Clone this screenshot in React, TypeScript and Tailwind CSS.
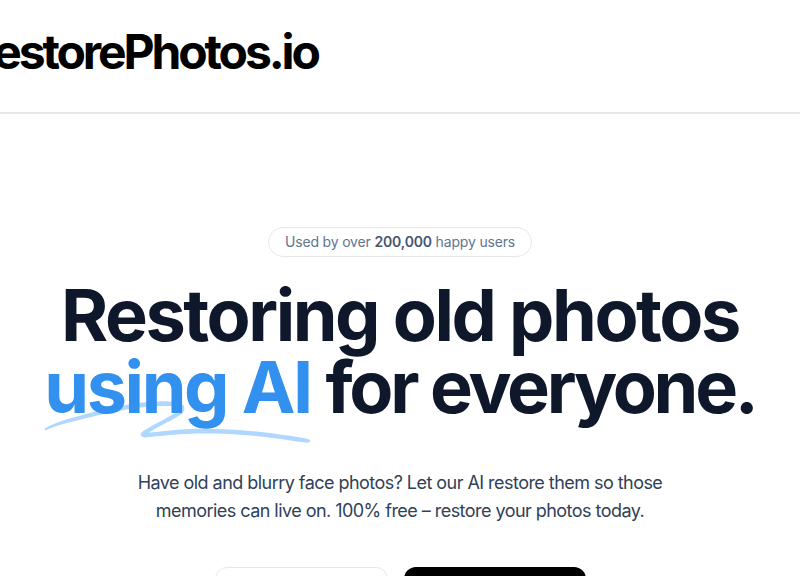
import React from 'react';

function SquigglyLines() {
  return (
    <svg
      aria-hidden="true"
      viewBox="0 0 418 42"
      className="absolute left-0 top-2/3 h-[0.58em] w-full fill-blue-300/70"
      preserveAspectRatio="none"
    >
      <path d="M203.371.916c-26.013-2.078-76.686 1.963-124.73 9.946L67.3 12.749C35.421 18.062 18.2 21.766 6.004 25.934 1.244 27.561.828 27.778.874 28.61c.07 1.214.828 1.121 9.595-1.176 9.072-2.377 17.15-3.920 39.246-7.496C123.565 7.986 157.869 4.492 195.942 5.046c7.461.108 19.25 1.696 19.17 2.582-.107 1.183-7.874 4.31-25.750 10.366-21.992 7.450-35.43 12.534-36.701 13.884-2.173 2.308-.202 4.407 4.442 4.734 2.654.187 3.263.157 15.593-.78 35.401-2.686 57.944-3.488 88.365-3.143 46.327.526 75.721 2.23 130.788 7.584 19.787 1.924 20.814 1.98 24.557 1.332l.066-.011c1.201-.203 1.53-1.825.399-2.335-2.911-1.31-4.893-1.604-22.048-3.261-57.509-5.556-87.871-7.36-132.059-7.842-23.239-.254-33.617-.116-50.627.674-11.629.54-42.371 2.494-46.696 2.967-2.359.259 8.133-3.625 26.504-9.81 23.239-7.825 27.934-10.149 28.304-14.005.417-4.348-3.529-6-16.878-7.066Z" />
    </svg>
  );
}

export default function App() {
  return (
    <div className="min-h-screen overflow-hidden bg-white font-['Inter','Noto_Sans',sans-serif]">
      {/* Header */}
      <header className="flex h-[114px] items-center border-b-2 border-gray-200">
        <h1 className="-ml-[22px] -mt-[8px] text-5xl font-bold tracking-[-0.065em] text-black">restorePhotos.io</h1>
      </header>

      {/* Hero */}
      <main className="flex flex-col items-center px-4 pt-[113px] text-center">
        <p className="rounded-2xl border border-gray-200 px-4 py-1 text-sm tracking-[-0.012em] text-slate-500">
          Used by over <span className="font-semibold text-slate-600">200,000</span> happy users
        </p>
        <h2 className="mt-[22px] text-7xl font-bold tracking-[-0.034em] text-slate-900">
          Restoring old photos{' '}
          <span className="relative whitespace-nowrap text-[#3290EE]">
            <SquigglyLines />
            <span className="relative">using AI</span>
          </span>{' '}
          <span className="tracking-[-0.045em]">for everyone.</span>
        </h2>
        <p className="mt-[46px] max-w-xl text-lg leading-7 tracking-[-0.03em] text-slate-700">
          Have old and blurry face photos? Let our AI restore them so those memories can live on. 100% free – restore your photos today.
        </p>
        <div className="mt-[42px] flex gap-4">
          <a className="w-[173px] rounded-xl border border-gray-200 bg-white px-4 py-3 font-medium text-black">
            Learn how it's built
          </a>
          <a className="w-[182px] rounded-xl bg-black px-4 py-3 font-medium text-white">
            Restore your photos
          </a>
        </div>
      </main>
    </div>
  );
}
